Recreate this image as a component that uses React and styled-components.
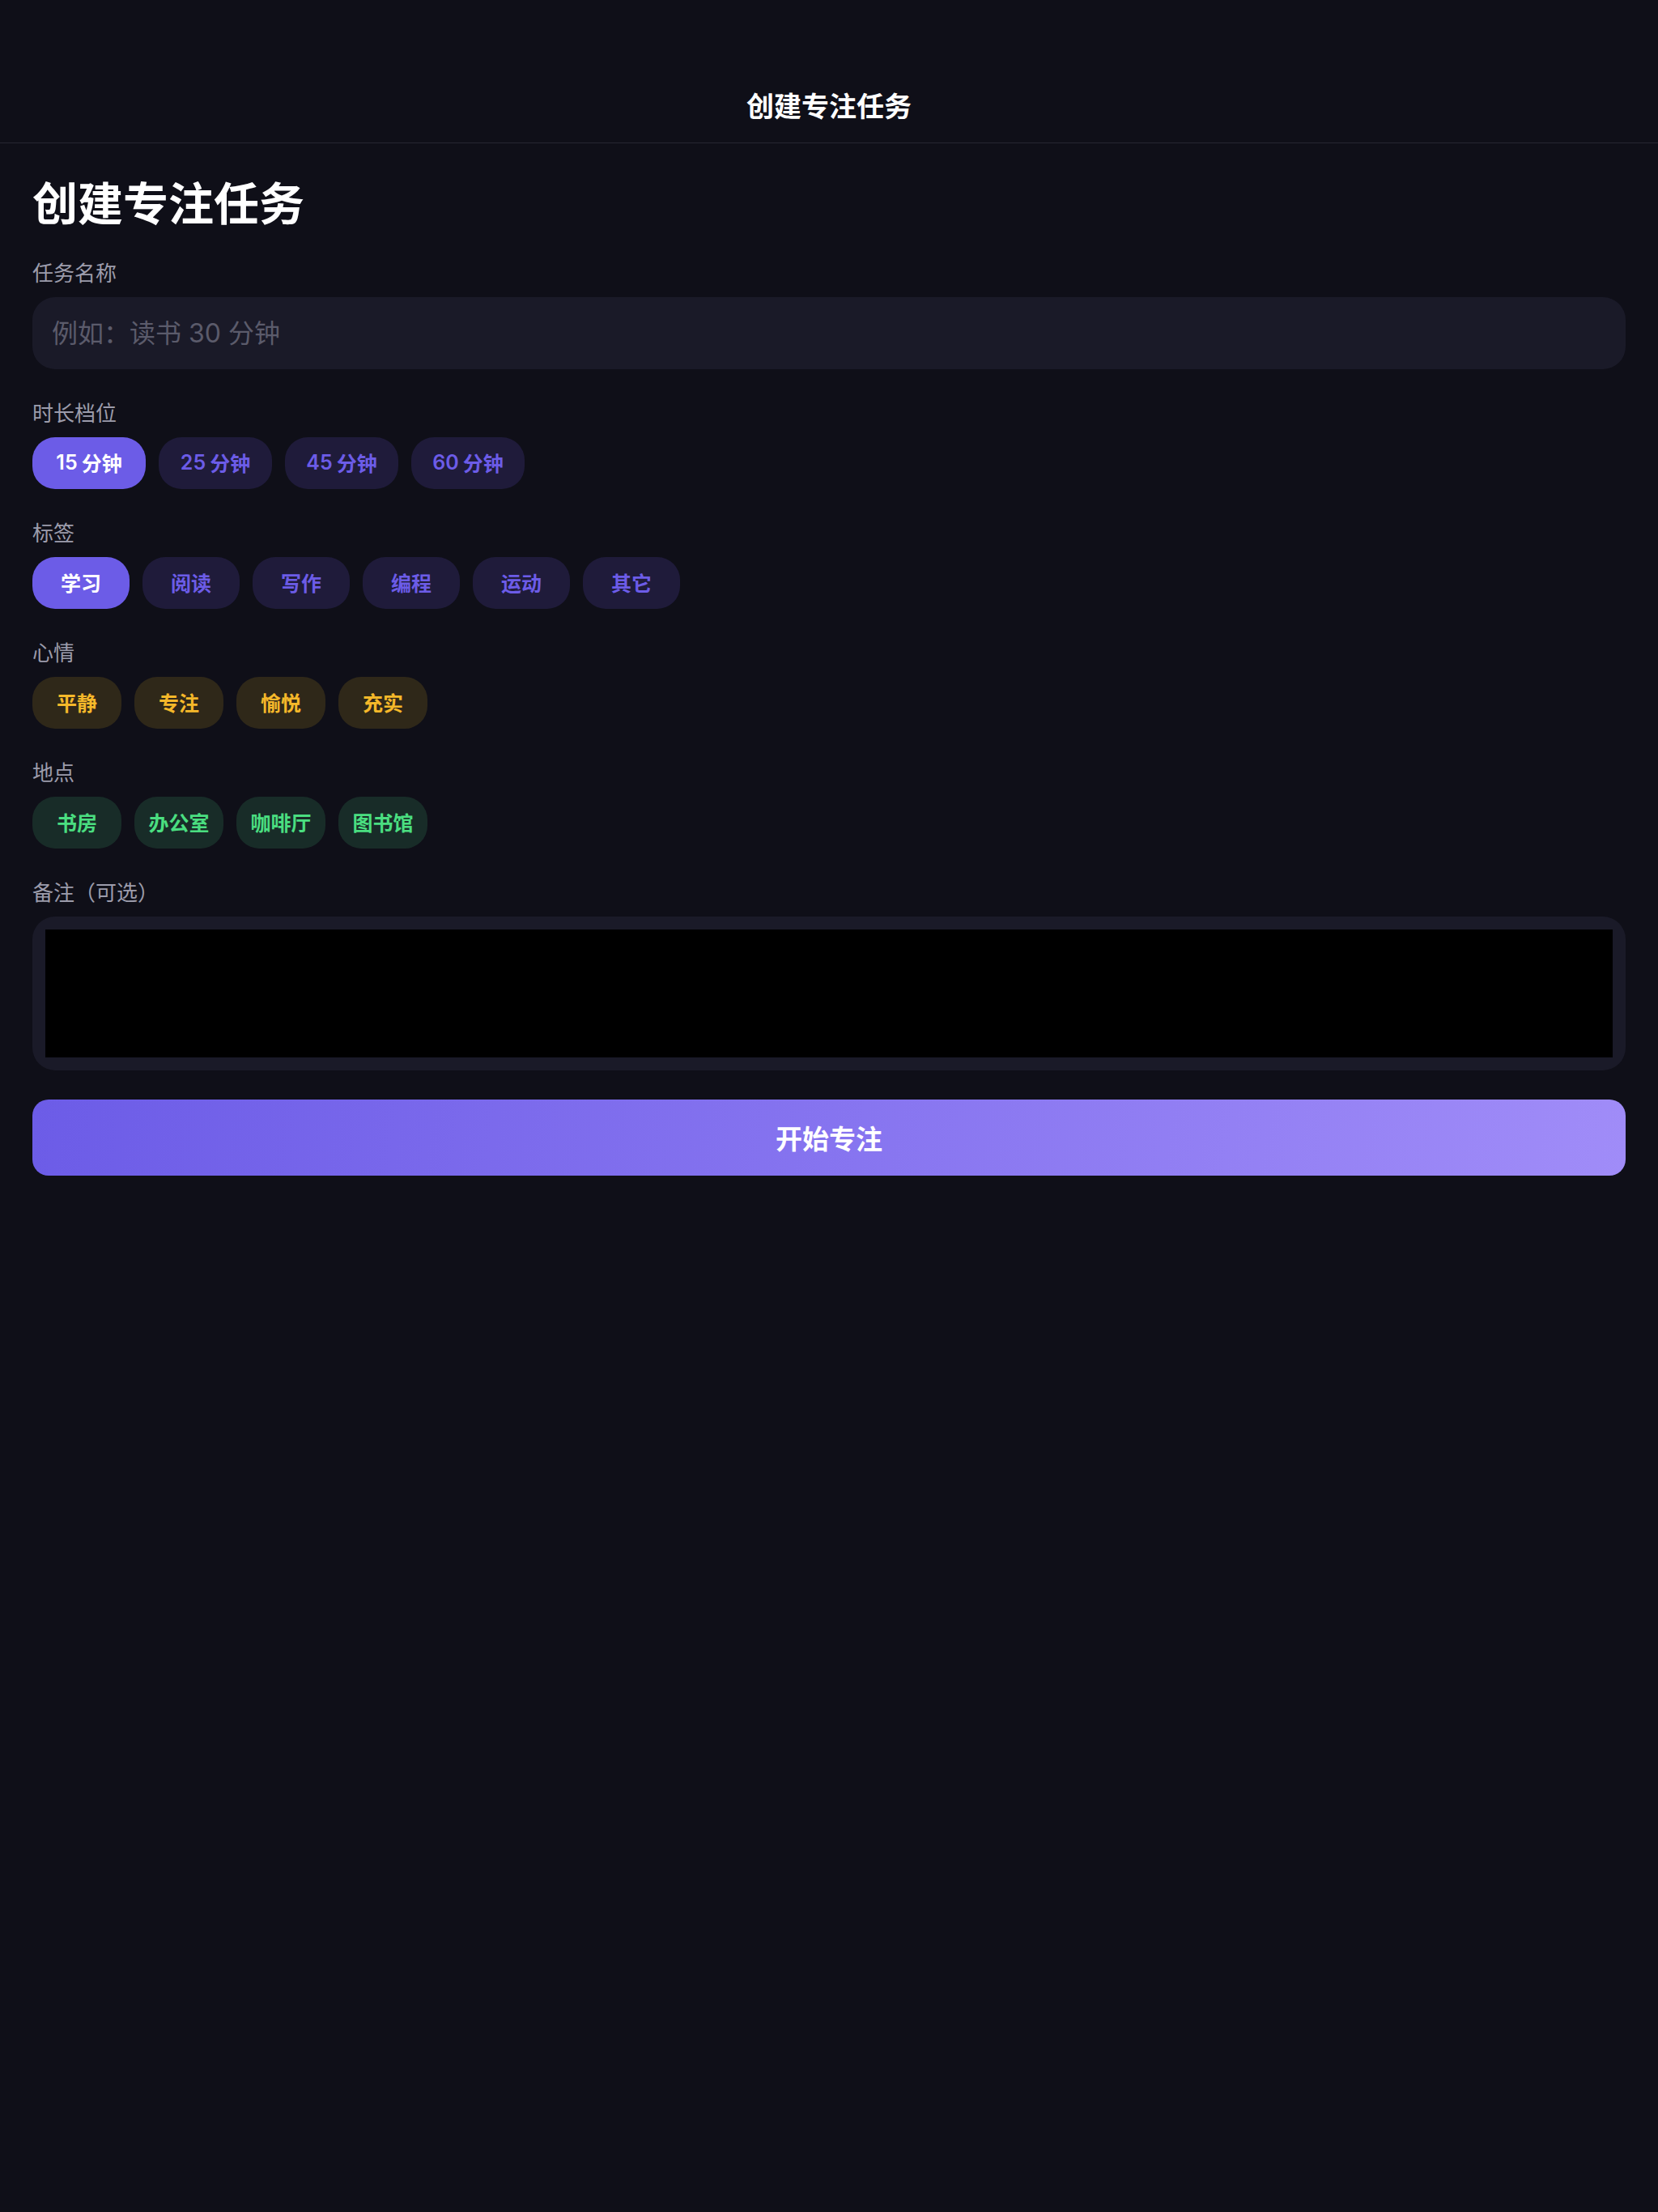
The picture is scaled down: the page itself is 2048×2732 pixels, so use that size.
import React from 'react'
import styled, { createGlobalStyle, css } from 'styled-components'

const GlobalStyle = createGlobalStyle`
    * { box-sizing: border-box; }
    html, body {
        margin: 0;
        padding: 0;
        background: #0f0f18;
        font-family: "Inter", "Noto Sans CJK SC", "Noto Sans", sans-serif;
    }
    body { min-height: 2732px; }
`

const Page = styled.div`
    min-height: 2732px;
    background: #0f0f18;
    color: #ffffff;
`

const NavBar = styled.header`
    padding-top: 88px;
    height: 177px;
    border-bottom: 1px solid #262631;
`

const NavTitle = styled.h2`
    margin: 0;
    height: 88px;
    line-height: 88px;
    text-align: center;
    font-size: 34px;
    font-weight: 600;
    color: #ffffff;
`

const Content = styled.main`
    padding: 40px 40px;
`

const Heading = styled.h1`
    margin: 0 0 34px 0;
    font-size: 56px;
    line-height: 66px;
    padding-top: 2px;
    font-weight: 700;
    color: #ffffff;
`

const Form = styled.div`
    display: flex;
    flex-direction: column;
    gap: 36px;
`

const Field = styled.section`
    display: flex;
    flex-direction: column;
`

const Label = styled.label`
    font-size: 26px;
    line-height: 32px;
    padding-top: 3px;
    margin-bottom: 13px;
    color: #9c9cab;
`

const TextInput = styled.input`
    height: 89px;
    border: none;
    outline: none;
    border-radius: 28px;
    background: #1a1a28;
    padding: 0 24px;
    font-family: inherit;
    font-size: 32px;
    color: #ffffff;
    &::placeholder {
        color: #5b5b6b;
    }
`

const ChipRow = styled.div`
    display: flex;
    gap: 16px;
`

const tones = {
    purple: { bg: '#1f1b3a', fg: '#6c5ce7' },
    amber: { bg: '#2f2819', fg: '#f5b82a' },
    green: { bg: '#182c28', fg: '#4ade80' },
}

const Chip = styled.button`
    width: ${p => p.$width}px;
    height: 64px;
    padding: 0 0 2px 0;
    border: none;
    border-radius: 28px;
    font-family: inherit;
    font-size: 25px;
    font-weight: 600;
    display: flex;
    align-items: center;
    justify-content: center;
    cursor: pointer;
    background: ${p => tones[p.$tone].bg};
    color: ${p => tones[p.$tone].fg};
    ${p => p.$active && css`
        background: #6c5ce7;
        color: #ffffff;
    `}
`

const Minutes = styled.span`
    margin-right: 5px;
`

const NoteBox = styled.div`
    background: #1a1a28;
    border-radius: 28px;
    padding: 16px;
`

const NoteArea = styled.textarea`
    display: block;
    width: 100%;
    height: 158px;
    border: none;
    outline: none;
    resize: none;
    background: #000000;
    color: #ffffff;
    font-family: inherit;
    font-size: 32px;
`

const StartButton = styled.button`
    height: 94px;
    border: none;
    border-radius: 20px;
    background: linear-gradient(100deg, #6c5ce7 0%, #a08cf8 100%);
    color: #ffffff;
    font-family: inherit;
    font-size: 33px;
    font-weight: 600;
    cursor: pointer;
`

const durations = [15, 25, 45, 60]
const tags = ['学习', '阅读', '写作', '编程', '运动', '其它']
const moods = ['平静', '专注', '愉悦', '充实']
const places = ['书房', '办公室', '咖啡厅', '图书馆']

export default function App() {
    const [name, setName] = React.useState('')
    const [duration, setDuration] = React.useState(15)
    const [tag, setTag] = React.useState('学习')
    const [mood, setMood] = React.useState(null)
    const [place, setPlace] = React.useState(null)
    const [note, setNote] = React.useState('')

    return (
        <Page>
            <GlobalStyle />
            <NavBar>
                <NavTitle>创建专注任务</NavTitle>
            </NavBar>

            <Content>
                <Heading>创建专注任务</Heading>

                <Form>
                    <Field>
                        <Label>任务名称</Label>
                        <TextInput
                            placeholder="例如：读书 30 分钟"
                            value={name}
                            onChange={e => setName(e.target.value)}
                        />
                    </Field>

                    <Field>
                        <Label>时长档位</Label>
                        <ChipRow>
                            {durations.map(d => (
                                <Chip key={d} $width={140} $tone="purple" $active={d === duration} onClick={() => setDuration(d)}>
                                    <Minutes>{d}</Minutes>分钟
                                </Chip>
                            ))}
                        </ChipRow>
                    </Field>

                    <Field>
                        <Label>标签</Label>
                        <ChipRow>
                            {tags.map(t => (
                                <Chip key={t} $width={120} $tone="purple" $active={t === tag} onClick={() => setTag(t)}>
                                    {t}
                                </Chip>
                            ))}
                        </ChipRow>
                    </Field>

                    <Field>
                        <Label>心情</Label>
                        <ChipRow>
                            {moods.map(m => (
                                <Chip key={m} $width={110} $tone="amber" $active={m === mood} onClick={() => setMood(m)}>
                                    {m}
                                </Chip>
                            ))}
                        </ChipRow>
                    </Field>

                    <Field>
                        <Label>地点</Label>
                        <ChipRow>
                            {places.map(p => (
                                <Chip key={p} $width={110} $tone="green" $active={p === place} onClick={() => setPlace(p)}>
                                    {p}
                                </Chip>
                            ))}
                        </ChipRow>
                    </Field>

                    <Field>
                        <Label>备注（可选）</Label>
                        <NoteBox>
                            <NoteArea value={note} onChange={e => setNote(e.target.value)} />
                        </NoteBox>
                    </Field>

                    <StartButton type="button">开始专注</StartButton>
                </Form>
            </Content>
        </Page>
    )
}
